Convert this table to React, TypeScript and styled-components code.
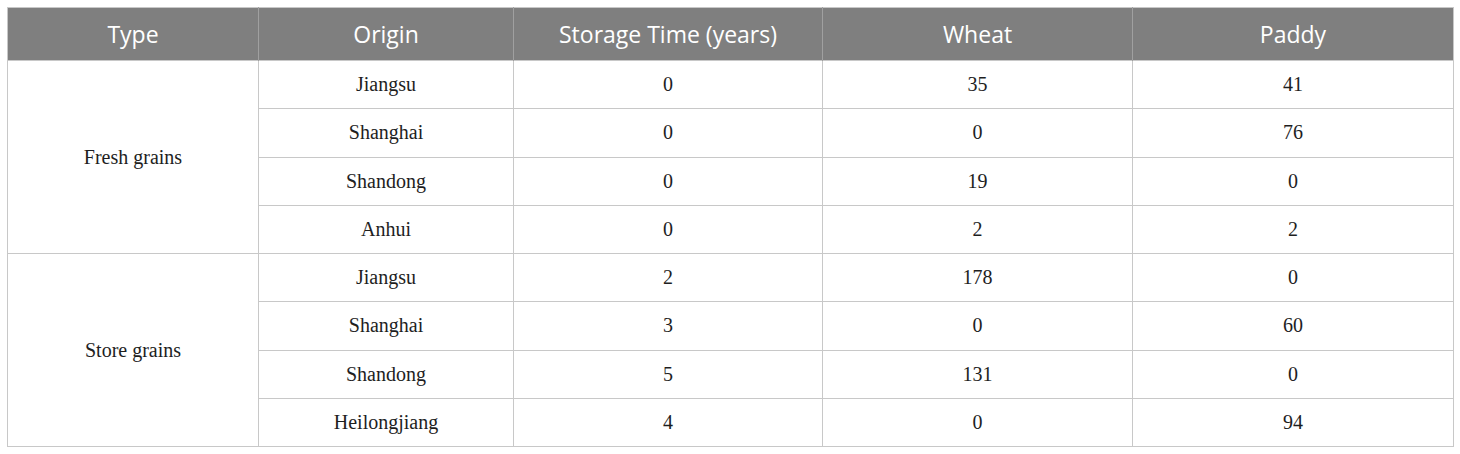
import React from "react";
import styled, { createGlobalStyle } from "styled-components";

const Global = createGlobalStyle`
  html, body { margin: 0; padding: 0; background: #fff; }
`;

const Wrap = styled.div`
  padding: 7px 7px 0 7px;
`;

const Table = styled.table`
  width: 1446px;
  border-collapse: collapse;
  table-layout: fixed;
  border: 1px solid #c8c8c8;
`;

const Col = styled.col<{ $w: number }>`
  width: ${(p) => p.$w}px;
`;

const HeadCell = styled.th`
  background: #7f7f7f;
  color: #fff;
  font-family: "Open Sans", "Noto Sans", sans-serif;
  font-weight: 400;
  font-size: 23px;
  height: 52px;
  padding: 0;
  text-align: center;
  border-left: 1px solid #a0a0a0;
  &:first-child { border-left: none; }
`;

const Cell = styled.td`
  font-family: "Liberation Serif", "Times New Roman", serif;
  font-size: 20px;
  color: #1e1e1e;
  height: 47.25px;
  padding: 0;
  text-align: center;
  vertical-align: middle;
  border: 1px solid #c8c8c8;
`;

type Row = [string, string, string, string];

const widths = [251, 255, 309, 310, 321];
const headers = ["Type", "Origin", "Storage Time (years)", "Wheat", "Paddy"];

const groups: { type: string; rows: Row[] }[] = [
  {
    type: "Fresh grains",
    rows: [
      ["Jiangsu", "0", "35", "41"],
      ["Shanghai", "0", "0", "76"],
      ["Shandong", "0", "19", "0"],
      ["Anhui", "0", "2", "2"],
    ],
  },
  {
    type: "Store grains",
    rows: [
      ["Jiangsu", "2", "178", "0"],
      ["Shanghai", "3", "0", "60"],
      ["Shandong", "5", "131", "0"],
      ["Heilongjiang", "4", "0", "94"],
    ],
  },
];

export default function App() {
  return (
    <>
      <Global />
      <Wrap>
        <Table>
          <colgroup>
            {widths.map((w, i) => (
              <Col key={i} $w={w} />
            ))}
          </colgroup>
          <thead>
            <tr>
              {headers.map((h) => (
                <HeadCell key={h}>{h}</HeadCell>
              ))}
            </tr>
          </thead>
          <tbody>
            {groups.map((g) =>
              g.rows.map((r, i) => (
                <tr key={g.type + i}>
                  {i === 0 && <Cell rowSpan={g.rows.length}>{g.type}</Cell>}
                  {r.map((v, j) => (
                    <Cell key={j}>{v}</Cell>
                  ))}
                </tr>
              ))
            )}
          </tbody>
        </Table>
      </Wrap>
    </>
  );
}
